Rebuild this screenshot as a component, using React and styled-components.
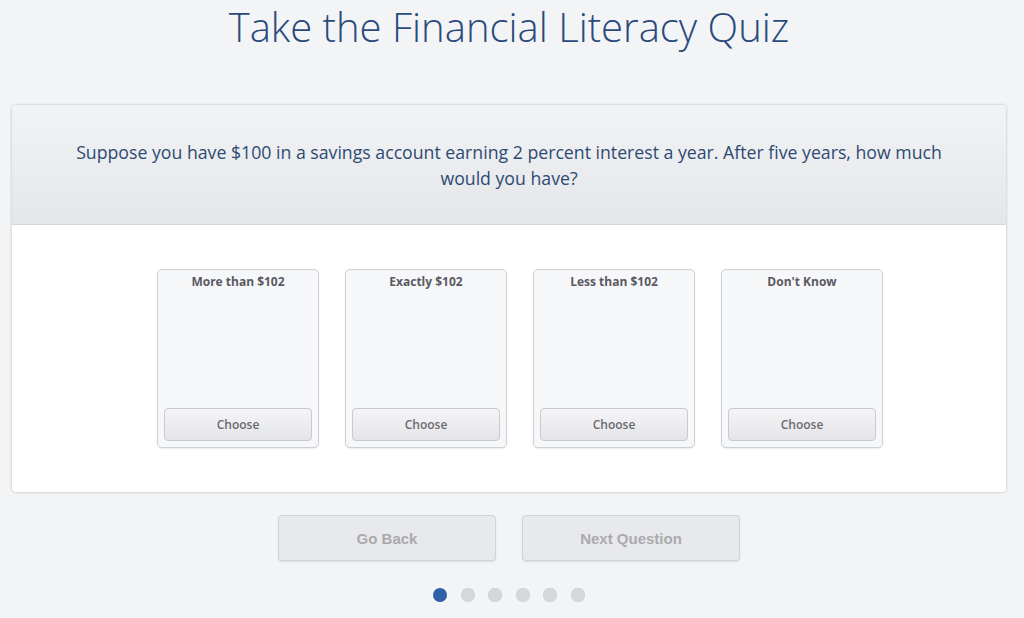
import React from "react";
import styled, { createGlobalStyle } from "styled-components";

const Global = createGlobalStyle`
  html, body { margin: 0; padding: 0; background: #f3f4f6; }
  body { font-family: "Open Sans", sans-serif; }
  * { box-sizing: border-box; }
`;

const Page = styled.div`
  width: 1024px;
  height: 618px;
  padding: 0 18px 0 12px;
  display: flex;
  flex-direction: column;
  align-items: center;
  overflow: hidden;
`;

const Title = styled.h1`
  margin: 0;
  height: 105px;
  font-family: "Open Sans", sans-serif;
  font-weight: 300;
  font-size: 40px;
  line-height: 54px;
  color: #2b4a7c;
  text-align: center;
`;

const Panel = styled.section`
  width: 100%;
  background: #fff;
  border-radius: 4px;
  box-shadow: 0 0 3px rgba(0, 0, 0, 0.25);
  overflow: hidden;
`;

const QuestionHeader = styled.div`
  height: 120px;
  background: linear-gradient(#f2f3f5, #e5e6e9);
  border-bottom: 1px solid #d5d6da;
  display: flex;
  align-items: center;
  justify-content: center;
  padding: 0 50px;
`;

const Question = styled.p`
  margin: 0;
  font-size: 17.7px;
  line-height: 26px;
  color: #2d4a73;
  text-align: center;
`;

const Choices = styled.div`
  display: flex;
  justify-content: center;
  gap: 26px;
  padding: 44px 0 44px 22px;
`;

const Card = styled.div`
  width: 162px;
  height: 179px;
  background: #f6f7f9;
  border: 1px solid #cfd0d4;
  border-radius: 5px;
  box-shadow: 0 1px 2px rgba(0, 0, 0, 0.08);
  display: flex;
  flex-direction: column;
  justify-content: space-between;
  padding: 4px 6px 6px;
`;

const CardTitle = styled.div`
  font-weight: 700;
  font-size: 12px;
  line-height: 16px;
  color: #5a5a62;
  text-align: center;
`;

const ChooseButton = styled.button`
  height: 33px;
  width: 100%;
  border: 1px solid #c9cacf;
  border-radius: 4px;
  background: linear-gradient(#f4f4f6, #e4e5e8);
  font-family: "Open Sans", sans-serif;
  font-weight: 600;
  font-size: 12px;
  color: #6a6a72;
  cursor: pointer;
`;

const NavRow = styled.div`
  display: flex;
  gap: 26px;
  margin-top: 23px;
`;

const NavButton = styled.button`
  width: 218px;
  height: 46px;
  border: 1px solid #d2d3d7;
  border-radius: 4px;
  background: #e8e9ec;
  box-shadow: 0 1px 2px rgba(0, 0, 0, 0.1);
  font-family: "Liberation Sans", Arial, sans-serif;
  font-weight: 700;
  font-size: 15px;
  color: #aaaaae;
`;

const Dots = styled.div`
  display: flex;
  gap: 13.5px;
  margin-top: 27px;
`;

const Dot = styled.span`
  width: 14px;
  height: 14px;
  border-radius: 50%;
  background: ${(p) => (p.$active ? "#2d60a8" : "#d6d7da")};
  box-shadow: inset 0 0 1px rgba(0, 0, 0, 0.15);
`;

const choices = ["More than $102", "Exactly $102", "Less than $102", "Don't Know"];

export default function App() {
  return (
    <>
      <Global />
      <Page>
        <Title>Take the Financial Literacy Quiz</Title>
        <Panel>
          <QuestionHeader>
            <Question>
              Suppose you have $100 in a savings account earning 2 percent interest a year. After five years, how much would you have?
            </Question>
          </QuestionHeader>
          <Choices>
            {choices.map((c) => (
              <Card key={c}>
                <CardTitle>{c}</CardTitle>
                <ChooseButton>Choose</ChooseButton>
              </Card>
            ))}
          </Choices>
        </Panel>
        <NavRow>
          <NavButton>Go Back</NavButton>
          <NavButton>Next Question</NavButton>
        </NavRow>
        <Dots>
          {[0, 1, 2, 3, 4, 5].map((i) => (
            <Dot key={i} $active={i === 0} />
          ))}
        </Dots>
      </Page>
    </>
  );
}
